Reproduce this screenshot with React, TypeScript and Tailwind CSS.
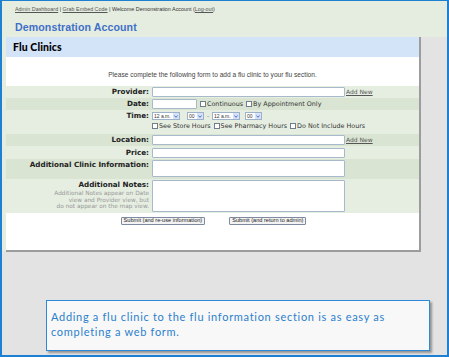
import { type FC, type ReactNode } from 'react';

const LIGHT = 'bg-[#e6eee2]';
const DARK = 'bg-[#d9e4d3]';

const Label: FC<{ children: ReactNode }> = ({ children }) => (
  <span className="font-['DejaVu_Sans',sans-serif] text-[7.2px] font-bold leading-none text-[#222]">{children}</span>
);

const Box: FC<{ w: string }> = ({ w }) => (
  <div className={`${w} h-[10px] bg-white border border-[#a7b9cb] rounded-[1px]`} />
);

const Check: FC<{ label: string }> = ({ label }) => (
  <span className="flex items-center gap-[1px] font-['DejaVu_Sans',sans-serif] text-[6.4px] leading-none text-[#333]">
    <span className="w-[6px] h-[6px] border border-[#6f7f8f] bg-white" />
    {label}
  </span>
);

const Select: FC<{ text: string; w: string }> = ({ text, w }) => (
  <div className={`${w} h-[8px] flex items-center justify-between bg-white border border-[#9db1c8] pl-[1px] font-['Liberation_Sans',sans-serif] text-[5px] leading-none text-[#333]`}>
    {text}
    <span className="w-[6px] h-[6px] bg-[#d5e1f7] flex items-center justify-center mr-[0.5px]">
      <svg width="4" height="3" viewBox="0 0 4 3">
        <path d="M0.4 0.5 L2 2.3 L3.6 0.5" fill="none" stroke="#3b64c4" strokeWidth="0.9" />
      </svg>
    </span>
  </div>
);

const AddNew = () => (
  <span className="ml-[1px] font-['DejaVu_Sans',sans-serif] text-[6px] leading-none text-[#555] underline">Add New</span>
);

const Row: FC<{ bg: string; h: string; label: ReactNode; top?: boolean; children: ReactNode }> = ({ bg, h, label, top, children }) => (
  <div className={`flex ${bg} ${h}`}>
    <div className={`w-[144px] flex justify-end pr-[1px] ${top ? 'items-start pt-[2px]' : 'items-center'}`}>{label}</div>
    <div className={`flex-1 pl-[2px] flex ${top ? 'items-start pt-[1px]' : 'items-center'}`}>{children}</div>
  </div>
);

export default function App() {
  return (
    <div className="w-[449px] h-[357px] box-border border-x-2 border-t border-b-2 border-[#1d80d2] bg-[#e3e3e3] overflow-hidden">
      {/* Top band */}
      <div className="h-[36px] bg-[#e5ede1] pl-[13px] pt-[6px]">
        <div className="font-['Liberation_Sans',sans-serif] text-[5.4px] leading-none text-[#333]">
          <span className="underline text-[#555]">Admin Dashboard</span> | <span className="underline text-[#555]">Grab Embed Code</span> | Welcome Demonstration Account (<span className="underline text-[#555]">Log-out</span>)
        </div>
        <div className="mt-[10px] font-['Liberation_Sans',sans-serif] text-[10.6px] font-bold leading-none text-[#3f70c8] tracking-[0.1px]">Demonstration Account</div>
      </div>

      <div className="flex items-start">
        <div className="w-[4px] h-[214px] bg-[#e5ede1]" />
        <div className="w-[415px] bg-white border-r-2 border-b-2 border-[#9c9c9c]">
          {/* Header */}
          <div className="h-[20px] bg-[#d3e4f9] flex items-center pl-[7px]">
            <span className="font-['Lato',sans-serif] text-[10.5px] font-black leading-none text-black tracking-[0.1px]">Flu Clinics</span>
          </div>

          <div className="h-[29px] flex items-end justify-center pb-[7px]">
            <span className="font-['Liberation_Sans',sans-serif] text-[6.6px] leading-none text-[#444]">Please complete the following form to add a flu clinic to your flu section.</span>
          </div>

          <Row bg={LIGHT} h="h-[12px]" label={<Label>Provider:</Label>}>
            <Box w="w-[193px]" />
            <AddNew />
          </Row>
          <Row bg={DARK} h="h-[12px]" label={<Label>Date:</Label>}>
            <Box w="w-[45px]" />
            <span className="ml-[3px] flex gap-[3px]">
              <Check label="Continuous" />
              <Check label="By Appointment Only" />
            </span>
          </Row>
          <Row bg={LIGHT} h="h-[24px]" top label={<Label>Time:</Label>}>
            <div className="flex flex-col gap-[3px] pt-[1px]">
              <div className="flex items-center">
                <Select text="12 a.m." w="w-[28px]" />
                <span className="ml-[7px]"><Select text="00" w="w-[17px]" /></span>
                <span className="mx-[3px] font-['Liberation_Sans',sans-serif] text-[6px] leading-none text-[#555]">-</span>
                <Select text="12 a.m." w="w-[28px]" />
                <span className="ml-[5px]"><Select text="00" w="w-[17px]" /></span>
              </div>
              <div className="flex gap-[3px]">
                <Check label="See Store Hours" />
                <Check label="See Pharmacy Hours" />
                <Check label="Do Not Include Hours" />
              </div>
            </div>
          </Row>
          <Row bg={DARK} h="h-[12px]" label={<Label>Location:</Label>}>
            <Box w="w-[193px]" />
            <AddNew />
          </Row>
          <Row bg={LIGHT} h="h-[13px]" label={<Label>Price:</Label>}>
            <Box w="w-[193px]" />
          </Row>
          <Row bg={DARK} h="h-[20px]" top label={<Label>Additional Clinic Information:</Label>}>
            <div className="w-[193px] h-[17px] bg-white border border-[#a7b9cb] rounded-[1px]" />
          </Row>
          <Row
            bg={LIGHT}
            h="h-[34px]"
            top
            label={
              <div className="flex flex-col items-end">
                <Label>Additional Notes:</Label>
                <span className="mt-[2px] text-right font-['DejaVu_Sans',sans-serif] text-[5.8px] leading-[6.6px] text-[#999]">
                  Additional Notes appear on Date<br />view and Provider view, but<br />do not appear on the map view.
                </span>
              </div>
            }
          >
            <div className="w-[193px] h-[32px] bg-white border border-[#a7b9cb] rounded-[1px]" />
          </Row>

          {/* Buttons */}
          <div className="h-[37px] flex justify-center gap-[24px] pt-[4px] pl-[2px]">
            <span className="h-[8px] px-[2px] flex items-center border border-[#7d8aa0] rounded-[1px] bg-[#f3f3f3] font-['Liberation_Sans',sans-serif] text-[5.6px] leading-none text-[#222]">Submit (and re-use information)</span>
            <span className="h-[8px] px-[2px] flex items-center border border-[#7d8aa0] rounded-[1px] bg-[#f3f3f3] font-['Liberation_Sans',sans-serif] text-[5.6px] leading-none text-[#222]">Submit (and return to admin)</span>
          </div>
        </div>
      </div>

      {/* Caption */}
      <div className="mt-[48px] ml-[44px] w-[384px] h-[51px] bg-[#f8f8f8] border border-[#2d8ad8] shadow-[2px_2px_2px_rgba(0,0,0,0.35)] px-[4px] pt-[8px]">
        <p className="font-['Lato',sans-serif] text-[11px] leading-[15px] tracking-[0.7px] text-[#2b7fcc]">
          Adding a flu clinic to the flu information section is as easy as<br />completing a web form.
        </p>
      </div>
    </div>
  );
}
